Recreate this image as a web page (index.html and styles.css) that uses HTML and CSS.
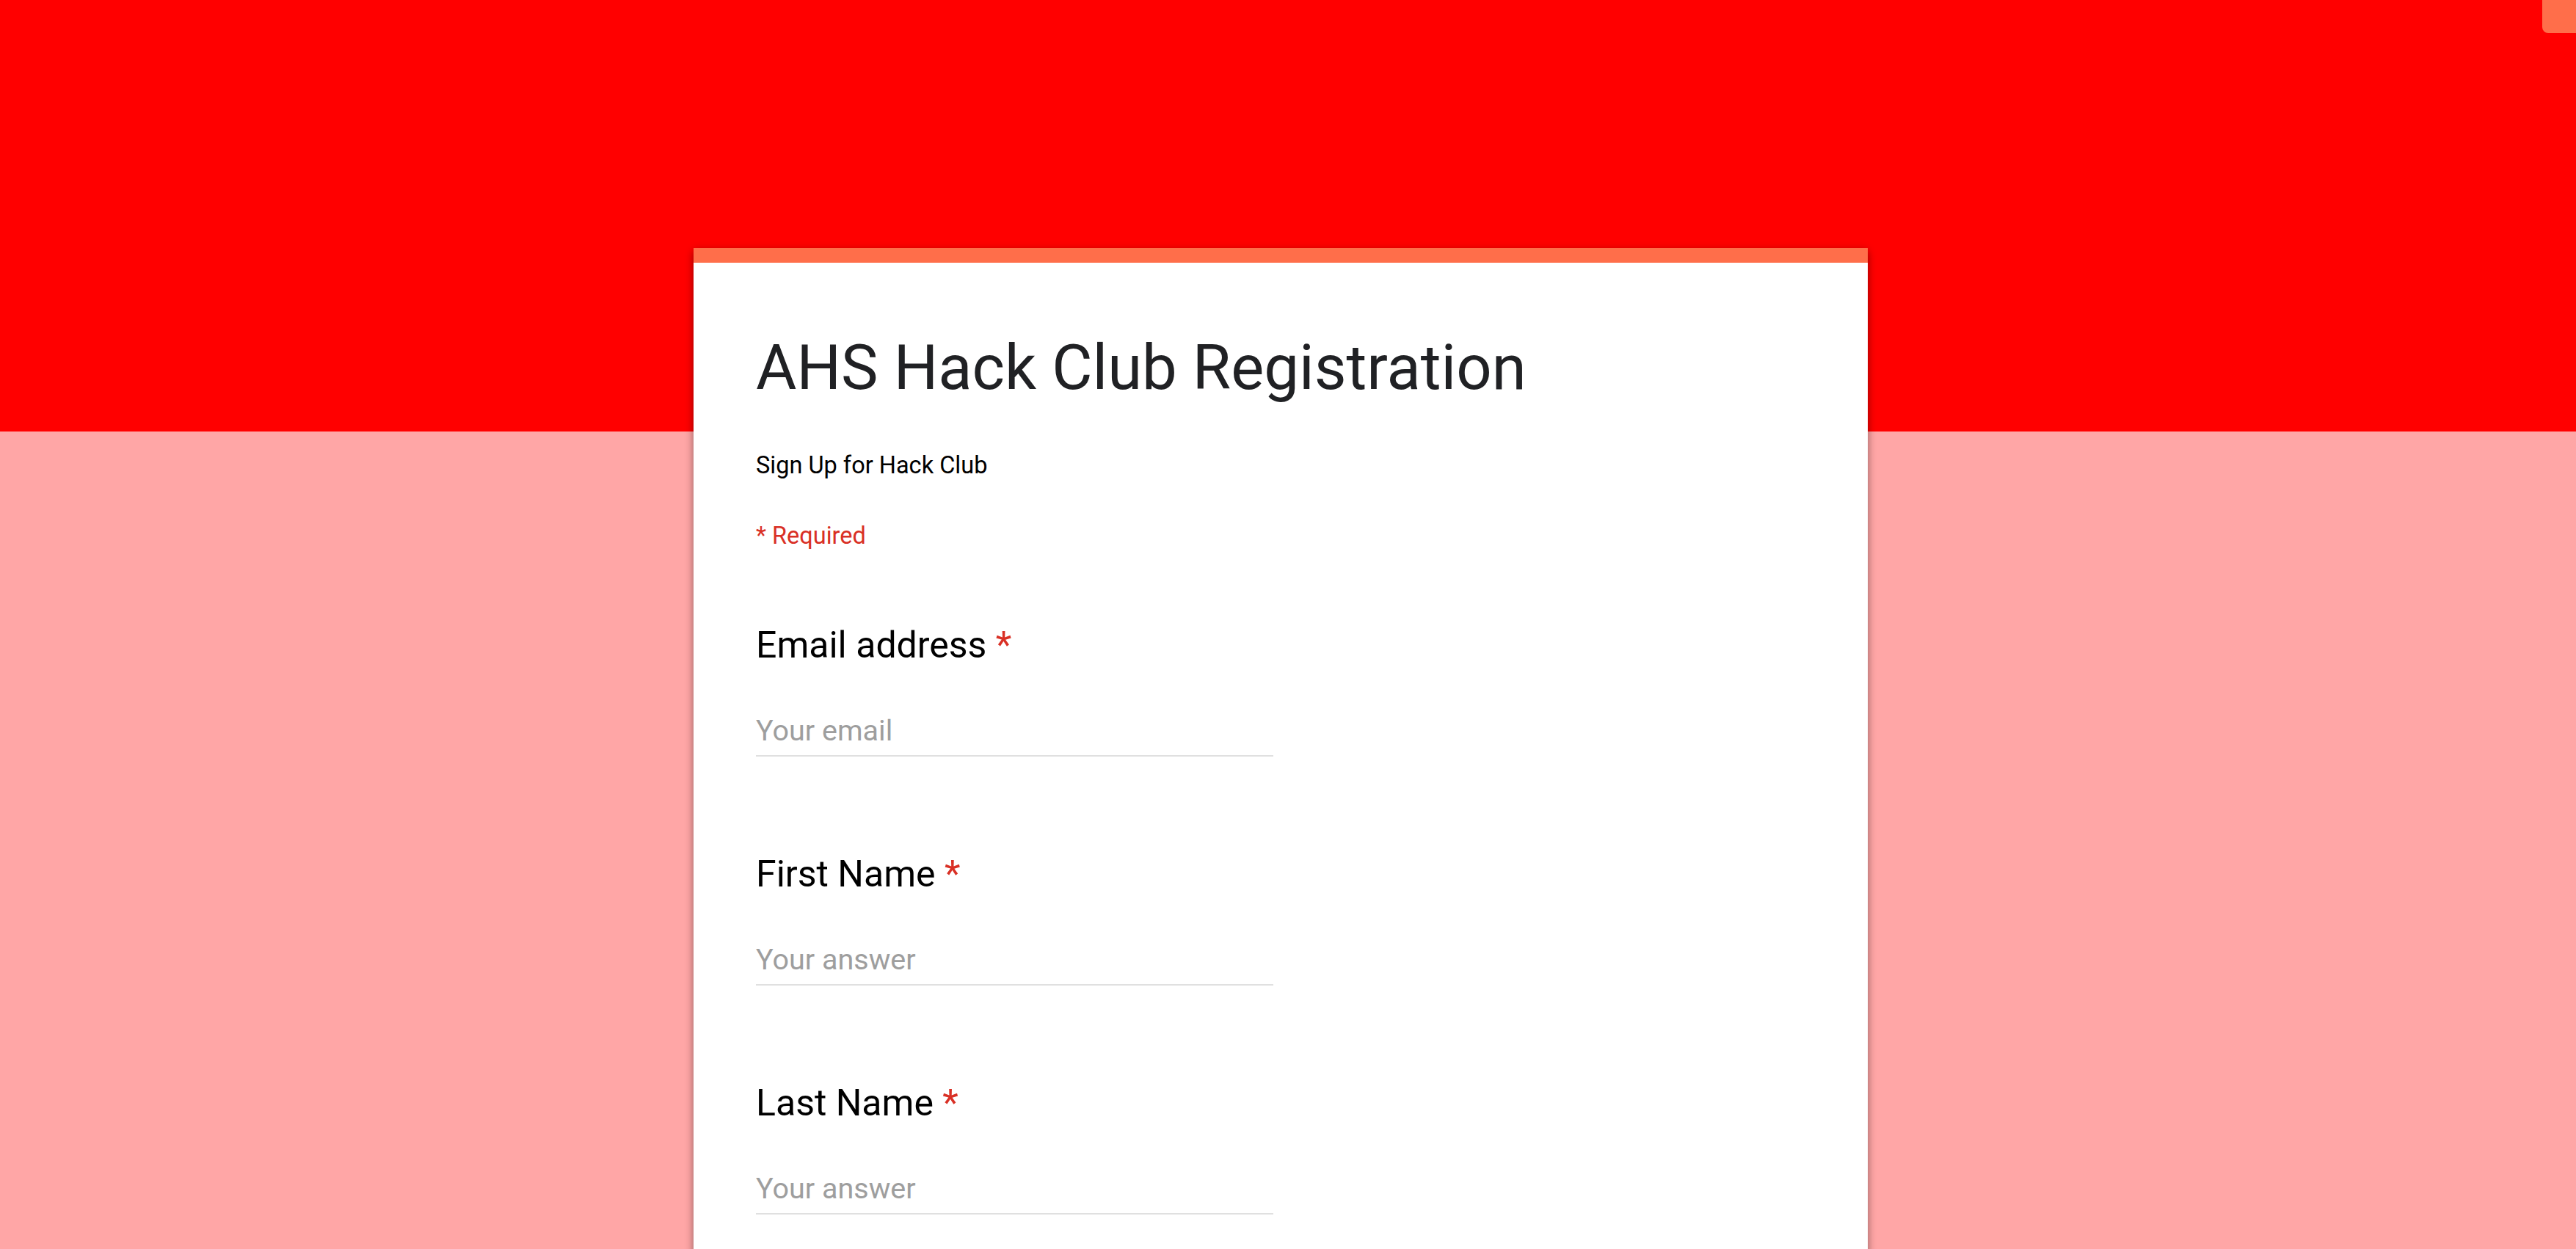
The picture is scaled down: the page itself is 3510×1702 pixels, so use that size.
FILE: index.html
```html
<!DOCTYPE html>
<html lang="en">
<head>
<meta charset="utf-8">
<title>AHS Hack Club Registration</title>
<link rel="stylesheet" href="styles.css">
</head>
<body>
<div class="page">
  <div class="corner-tab"></div>
  <main class="card">
    <div class="card-body">
      <h1 class="form-title">AHS Hack Club Registration</h1>
      <p class="form-desc">Sign Up for Hack Club</p>
      <p class="required-note">* Required</p>
      <div class="questions">
        <div class="question">
          <div class="q-label">Email address <span class="req">*</span></div>
          <div class="answer">Your email</div>
        </div>
        <div class="question">
          <div class="q-label">First Name <span class="req">*</span></div>
          <div class="answer">Your answer</div>
        </div>
        <div class="question">
          <div class="q-label">Last Name <span class="req">*</span></div>
          <div class="answer">Your answer</div>
        </div>
      </div>
    </div>
  </main>
</div>
</body>
</html>
```

FILE: styles.css
```css
html, body {
  margin: 0;
  padding: 0;
  height: 1702px;
  overflow: hidden;
}

body {
  font-family: Roboto, "Liberation Sans", Arial, sans-serif;
}

.page {
  position: relative;
  min-height: 1702px;
  display: flex;
  justify-content: center;
  align-items: flex-start;
  padding-right: 20px;
  background: linear-gradient(to bottom, #ff0000 0, #ff0000 588px, #ffa6a6 588px, #ffa6a6 100%);
}

.corner-tab {
  position: absolute;
  top: 0;
  right: 0;
  width: 46px;
  height: 45px;
  background: #ff6e4a;
  border-bottom-left-radius: 8px;
}

.card {
  width: 1600px;
  margin-top: 338px;
  min-height: 1500px;
  background: #ffffff;
  border-top: 20px solid #ff6e4a;
  box-shadow: 0 5px 10px rgba(0, 0, 0, 0.14), 0 7px 10px rgba(0, 0, 0, 0.12), 0 2px 12px rgba(0, 0, 0, 0.2);
}

.card-body {
  padding: 93px 85px 0 85px;
}

.form-title {
  margin: 0;
  font-size: 85px;
  line-height: 100px;
  font-weight: 400;
  color: #202124;
}

.form-desc {
  margin: 63px 0 0 0;
  font-size: 32.5px;
  line-height: 40px;
  color: #000000;
}

.required-note {
  margin: 56px 0 0 0;
  font-size: 32.5px;
  line-height: 40px;
  color: #d93025;
}

.questions {
  margin-top: 99px;
  display: flex;
  flex-direction: column;
  gap: 130px;
}

.q-label {
  font-size: 50px;
  line-height: 60px;
  color: #000000;
}

.req {
  color: #d93025;
}

.answer {
  width: 705px;
  margin-top: 63px;
  padding-bottom: 9px;
  font-size: 39.5px;
  line-height: 48px;
  color: #9e9e9e;
  border-bottom: 2px solid #e0e0e0;
}
```
